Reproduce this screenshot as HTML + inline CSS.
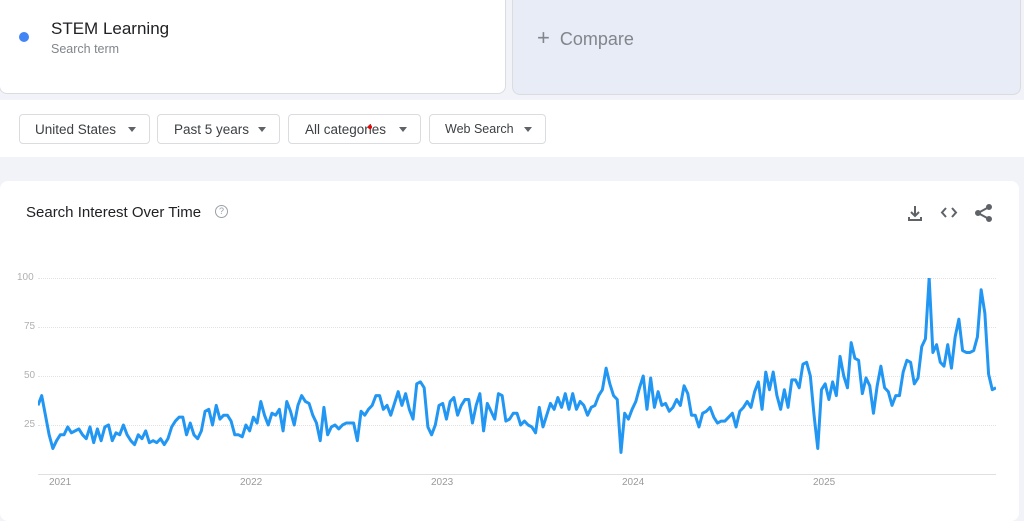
<!DOCTYPE html>
<html><head><meta charset="utf-8"><style>
body{margin:0;width:1024px;height:509px;background:#f1f3f8;font-family:"Liberation Sans",Arial,sans-serif;position:relative;overflow:hidden}
.a{position:absolute}
.card1{left:-1px;top:-5px;width:505px;height:97px;background:#fff;border:1px solid #dadce0;border-radius:0 0 8px 8px}
.card2{left:512px;top:-5px;width:507px;height:98px;background:#e8ecf6;border:1px solid #dadce0;border-radius:0 0 8px 8px}
.bar{left:0;top:100px;width:1024px;height:57px;background:#fff}
.dd{top:114px;height:30px;border:1px solid #dadce0;border-radius:4px;background:#fff;font-size:13.5px;color:#3c4043;line-height:29px;box-sizing:border-box;padding-left:15px}
.dd:after{content:"";position:absolute;right:13px;top:12px;border-left:4px solid transparent;border-right:4px solid transparent;border-top:5px solid #5f6368}
.chart{left:0;top:181px;width:1019px;height:340px;background:#fff;border-radius:8px}
.yl{left:17px;font-size:10px;color:#b0b0b0}
.xl{top:477px;font-size:10px;color:#9a9a9a}
.grid{left:38px;width:958px;border-top:1px dotted #e2e2e2}
</style></head><body>
<div class="a card1"></div>
<div class="a" style="left:19px;top:32px;width:10px;height:10px;border-radius:50%;background:#4285f4"></div>
<div class="a" style="left:51px;top:19px;font-size:17px;color:#202124">STEM Learning</div>
<div class="a" style="left:51px;top:42px;font-size:12.5px;color:#80868b">Search term</div>
<div class="a card2"></div>
<div class="a" style="left:537px;top:25px;font-size:18px;color:#80868b"><span style="font-size:22px;position:relative;top:0px">+</span>&nbsp; Compare</div>
<div class="a bar"></div>
<div class="a dd" style="left:19px;width:131px">United States</div>
<div class="a dd" style="left:157px;width:123px;padding-left:16px">Past 5 years</div>
<div class="a dd" style="left:288px;width:133px;padding-left:16px">All categories</div>
<div class="a" style="left:368px;top:125px;width:4px;height:4px;border-radius:50%;background:#e00"></div>
<div class="a dd" style="left:429px;width:117px;font-size:12.5px">Web Search</div>
<div class="a chart"></div>
<div class="a" style="left:26px;top:204px;font-size:15px;color:#202124">Search Interest Over Time</div>
<div class="a" style="left:215px;top:205px;width:11px;height:11px;border:1px solid #9aa0a6;border-radius:50%;font-size:9px;color:#9aa0a6;text-align:center;line-height:11px">?</div>
<svg class="a" style="left:905px;top:203px" width="90" height="20" viewBox="0 0 90 20" fill="none" stroke="#5f6368" stroke-width="2">
<path d="M10 3v10M6 9l4 4 4-4M4 14v3h12v-3"/>
<path d="M41 5l-4 4.5 4 4.5M47 5l4 4.5-4 4.5"/>
<circle cx="84" cy="4" r="2" fill="#5f6368"/><circle cx="73" cy="10" r="2" fill="#5f6368"/><circle cx="84" cy="16" r="2" fill="#5f6368"/><path d="M84 4L73 10l11 6"/>
</svg>
<div class="a grid" style="top:278px"></div>
<div class="a grid" style="top:327px"></div>
<div class="a grid" style="top:376px"></div>
<div class="a grid" style="top:425px"></div>
<div class="a grid" style="top:474px;border-top:1px solid #e0e0e0"></div>
<div class="a yl" style="top:272px">100</div>
<div class="a yl" style="top:321px;left:24px">75</div>
<div class="a yl" style="top:370px;left:24px">50</div>
<div class="a yl" style="top:419px;left:24px">25</div>
<div class="a xl" style="left:49px">2021</div>
<div class="a xl" style="left:240px">2022</div>
<div class="a xl" style="left:431px">2023</div>
<div class="a xl" style="left:622px">2024</div>
<div class="a xl" style="left:813px">2025</div>
<svg class="a" style="left:38px;top:278px" width="958" height="196" viewBox="0 -100 258 100" preserveAspectRatio="none">
<polyline fill="none" stroke="#2196f3" stroke-width="3" vector-effect="non-scaling-stroke" stroke-linejoin="round" points="0,-35 1,-40 2,-30 3,-20 4,-13 5,-17 6,-20 7,-20 8,-24 9,-21 10,-22 11,-23 12,-20 13,-18 14,-24 15,-16 16,-23 17,-17 18,-24 19,-25 20,-17 21,-21 22,-20 23,-25 24,-20 25,-17 26,-15 27,-20 28,-18 29,-22 30,-16 31,-17 32,-16 33,-18 34,-15 35,-18 36,-24 37,-27 38,-29 39,-29 40,-20 41,-26 42,-20 43,-18 44,-22 45,-32 46,-33 47,-25 48,-35 49,-28 50,-30 51,-30 52,-27 53,-20 54,-20 55,-19 56,-25 57,-22 58,-29 59,-26 60,-37 61,-30 62,-25 63,-31 64,-30 65,-33 66,-22 67,-37 68,-32 69,-25 70,-35 71,-40 72,-37 73,-36 74,-30 75,-26 76,-17 77,-34 78,-20 79,-24 80,-25 81,-23 82,-25 83,-26 84,-26 85,-26 86,-17 87,-32 88,-30 89,-33 90,-35 91,-40 92,-40 93,-33 94,-35 95,-30 96,-36 97,-42 98,-35 99,-41 100,-33 101,-28 102,-46 103,-47 104,-44 105,-24 106,-20 107,-25 108,-35 109,-36 110,-28 111,-37 112,-39 113,-30 114,-35 115,-38 116,-38 117,-26 118,-35 119,-41 120,-22 121,-36 122,-32 123,-28 124,-41 125,-40 126,-27 127,-28 128,-31 129,-31 130,-25 131,-27 132,-25 133,-24 134,-21 135,-34 136,-24 137,-30 138,-36 139,-33 140,-39 141,-34 142,-41 143,-33 144,-41 145,-33 146,-37 147,-35 148,-30 149,-34 150,-35 151,-40 152,-43 153,-54 154,-46 155,-40 156,-38 157,-11 158,-31 159,-28 160,-33 161,-37 162,-44 163,-50 164,-33 165,-49 166,-34 167,-42 168,-35 169,-36 170,-32 171,-34 172,-38 173,-35 174,-45 175,-41 176,-30 177,-30 178,-24 179,-31 180,-32 181,-34 182,-29 183,-26 184,-27 185,-27 186,-29 187,-31 188,-24 189,-32 190,-34 191,-37 192,-34 193,-42 194,-47 195,-33 196,-52 197,-43 198,-52 199,-40 200,-33 201,-43 202,-34 203,-48 204,-48 205,-44 206,-56 207,-57 208,-50 209,-30 210,-13 211,-43 212,-46 213,-38 214,-47 215,-40 216,-60 217,-50 218,-44 219,-67 220,-59 221,-58 222,-41 223,-49 224,-45 225,-31 226,-45 227,-55 228,-44 229,-42 230,-35 231,-40 232,-40 233,-52 234,-58 235,-57 236,-46 237,-49 238,-65 239,-69 240,-100 241,-62 242,-66 243,-57 244,-55 245,-66 246,-54 247,-70 248,-79 249,-63 250,-62 251,-62 252,-63 253,-70 254,-94 255,-82 256,-51 257,-43 258,-44"/>
</svg>
</body></html>
